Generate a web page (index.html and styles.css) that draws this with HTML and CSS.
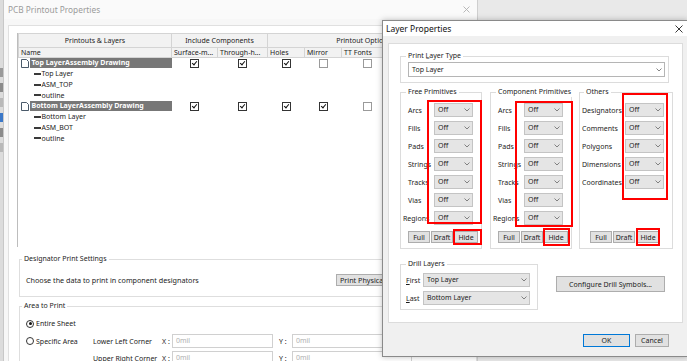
FILE: index.html
```html
<!DOCTYPE html>
<html lang="en">
<head>
	<meta charset="UTF-8">
	<title>PCB Printout Properties</title>
	<link rel="stylesheet" href="styles.css">
</head>
<body>
	<div class="desk">
		<div class="sliver">
			<span class="s1"></span><span class="s2"></span><span class="s3"></span><span class="s4"></span><span class="s2"></span><span class="s3"></span>
		</div>
		<div class="win">
			<div class="win-title">
				<span>PCB Printout Properties</span>
				<svg class="close" width="7" height="7" viewBox="0 0 7 7"><path d="M0.5 0.5L6.5 6.5M6.5 0.5L0.5 6.5" stroke="#b0b0b0" stroke-width="0.9"/></svg>
			</div>
			<div class="win-body">
				<div class="panel">
					<div class="grid-box">
						<table class="layers">
							<colgroup>
								<col style="width:153px"><col style="width:46px"><col style="width:50px"><col style="width:37px"><col style="width:37px"><col style="width:52px"><col style="width:66px">
							</colgroup>
							<thead>
								<tr class="h1">
									<th>Printouts &amp; Layers</th>
									<th colspan="2">Include Components</th>
									<th colspan="4">Printout Options</th>
								</tr>
								<tr class="h2">
									<th>Name</th>
									<th>Surface-m...</th>
									<th>Through-h...</th>
									<th>Holes</th>
									<th>Mirror</th>
									<th>TT Fonts</th>
									<th>Design Views</th>
								</tr>
							</thead>
							<tbody>
								<tr>
									<td class="print">
										<svg class="doc" width="8" height="9" viewBox="0 0 8 9"><path d="M0.5 0.5H5.5L7.5 2.5V8.5H0.5Z" fill="#fff" stroke="#4a5a6a"/><path d="M1 8H7.5V8.5H1Z" fill="#4a5a6a"/></svg>
										<span class="pname">Top LayerAssembly Drawing</span>
									</td>
									<td><span class="cb on"></span></td>
									<td><span class="cb on"></span></td>
									<td><span class="cb on"></span></td>
									<td><span class="cb"></span></td>
									<td><span class="cb"></span></td>
									<td></td>
								</tr>
								<tr><td class="layer"><span class="dash"></span>Top Layer</td><td colspan="6"></td></tr>
								<tr><td class="layer"><span class="dash"></span>ASM_TOP</td><td colspan="6"></td></tr>
								<tr><td class="layer"><span class="dash"></span>outline</td><td colspan="6"></td></tr>
								<tr>
									<td class="print">
										<svg class="doc" width="8" height="9" viewBox="0 0 8 9"><path d="M0.5 0.5H5.5L7.5 2.5V8.5H0.5Z" fill="#fff" stroke="#4a5a6a"/><path d="M1 8H7.5V8.5H1Z" fill="#4a5a6a"/></svg>
										<span class="pname">Bottom LayerAssembly Drawing</span>
									</td>
									<td><span class="cb on"></span></td>
									<td><span class="cb on"></span></td>
									<td><span class="cb on"></span></td>
									<td><span class="cb on"></span></td>
									<td><span class="cb"></span></td>
									<td></td>
								</tr>
								<tr><td class="layer"><span class="dash"></span>Bottom Layer</td><td colspan="6"></td></tr>
								<tr><td class="layer"><span class="dash"></span>ASM_BOT</td><td colspan="6"></td></tr>
								<tr><td class="layer"><span class="dash"></span>outline</td><td colspan="6"></td></tr>
							</tbody>
						</table>
					</div>

					<fieldset class="mgroup desig">
						<legend>Designator Print Settings</legend>
						<div class="desig-row">
							<span>Choose the data to print in component designators</span>
							<span class="btn phys">Print Physical Designators</span>
						</div>
					</fieldset>

					<fieldset class="mgroup area">
						<legend>Area to Print</legend>
						<div class="area-grid">
							<span class="radio on"></span><span class="rlabel">Entire Sheet</span>
							<span></span><span></span><span></span><span></span><span></span><span></span>

							<span class="radio"></span><span class="rlabel">Specific Area</span>
							<span>Lower Left Corner</span><span>X :</span><span class="inp">0mil</span>
							<span class="ylab">Y :</span><span class="inp">0mil</span><span></span>

							<span></span><span></span>
							<span>Upper Right Corner</span><span>X :</span><span class="inp">0mil</span>
							<span class="ylab">Y :</span><span class="inp">0mil</span><span></span>
						</div>
					</fieldset>
				</div>
			</div>
		</div>

		<div class="dialog">
			<div class="dlg-title">
				<span>Layer Properties</span>
				<svg class="dclose" width="8" height="8" viewBox="0 0 8 8"><path d="M0.5 0.5L7.5 7.5M7.5 0.5L0.5 7.5" stroke="#222" stroke-width="0.9"/></svg>
			</div>
			<div class="dlg-body">
				<div class="dpanel">
					<fieldset class="dgroup ptype">
						<legend>Print L&#818;ayer Type</legend>
						<div class="sel wide white"><span>Top Layer</span><svg width="6" height="4" viewBox="0 0 6 4"><path d="M0.5 0.5L3 3L5.5 0.5" fill="none" stroke="#666" stroke-width="0.8"/></svg></div>
					</fieldset>

					<div class="prims">
						<fieldset class="dgroup prim free">
							<legend>Free Primitives</legend>
							<div class="prow"><span class="plab">Arcs</span><div class="sel"><span>Off</span><svg width="6" height="4" viewBox="0 0 6 4"><path d="M0.5 0.5L3 3L5.5 0.5" fill="none" stroke="#666" stroke-width="0.8"/></svg></div></div>
							<div class="prow"><span class="plab">Fills</span><div class="sel"><span>Off</span><svg width="6" height="4" viewBox="0 0 6 4"><path d="M0.5 0.5L3 3L5.5 0.5" fill="none" stroke="#666" stroke-width="0.8"/></svg></div></div>
							<div class="prow"><span class="plab">Pads</span><div class="sel"><span>Off</span><svg width="6" height="4" viewBox="0 0 6 4"><path d="M0.5 0.5L3 3L5.5 0.5" fill="none" stroke="#666" stroke-width="0.8"/></svg></div></div>
							<div class="prow"><span class="plab">Strings</span><div class="sel"><span>Off</span><svg width="6" height="4" viewBox="0 0 6 4"><path d="M0.5 0.5L3 3L5.5 0.5" fill="none" stroke="#666" stroke-width="0.8"/></svg></div></div>
							<div class="prow"><span class="plab">Tracks</span><div class="sel"><span>Off</span><svg width="6" height="4" viewBox="0 0 6 4"><path d="M0.5 0.5L3 3L5.5 0.5" fill="none" stroke="#666" stroke-width="0.8"/></svg></div></div>
							<div class="prow"><span class="plab">Vias</span><div class="sel"><span>Off</span><svg width="6" height="4" viewBox="0 0 6 4"><path d="M0.5 0.5L3 3L5.5 0.5" fill="none" stroke="#666" stroke-width="0.8"/></svg></div></div>
							<div class="prow"><span class="plab reg">Regions</span><div class="sel"><span>Off</span><svg width="6" height="4" viewBox="0 0 6 4"><path d="M0.5 0.5L3 3L5.5 0.5" fill="none" stroke="#666" stroke-width="0.8"/></svg></div></div>
							<div class="btns"><span class="btn sm">Full</span><span class="btn sm">Draft</span><span class="btn sm hide">Hide</span></div>
						</fieldset>

						<fieldset class="dgroup prim comp">
							<legend>Component Primitives</legend>
							<div class="prow"><span class="plab">Arcs</span><div class="sel"><span>Off</span><svg width="6" height="4" viewBox="0 0 6 4"><path d="M0.5 0.5L3 3L5.5 0.5" fill="none" stroke="#666" stroke-width="0.8"/></svg></div></div>
							<div class="prow"><span class="plab">Fills</span><div class="sel"><span>Off</span><svg width="6" height="4" viewBox="0 0 6 4"><path d="M0.5 0.5L3 3L5.5 0.5" fill="none" stroke="#666" stroke-width="0.8"/></svg></div></div>
							<div class="prow"><span class="plab">Pads</span><div class="sel"><span>Off</span><svg width="6" height="4" viewBox="0 0 6 4"><path d="M0.5 0.5L3 3L5.5 0.5" fill="none" stroke="#666" stroke-width="0.8"/></svg></div></div>
							<div class="prow"><span class="plab">Strings</span><div class="sel"><span>Off</span><svg width="6" height="4" viewBox="0 0 6 4"><path d="M0.5 0.5L3 3L5.5 0.5" fill="none" stroke="#666" stroke-width="0.8"/></svg></div></div>
							<div class="prow"><span class="plab">Tracks</span><div class="sel"><span>Off</span><svg width="6" height="4" viewBox="0 0 6 4"><path d="M0.5 0.5L3 3L5.5 0.5" fill="none" stroke="#666" stroke-width="0.8"/></svg></div></div>
							<div class="prow"><span class="plab">Vias</span><div class="sel"><span>Off</span><svg width="6" height="4" viewBox="0 0 6 4"><path d="M0.5 0.5L3 3L5.5 0.5" fill="none" stroke="#666" stroke-width="0.8"/></svg></div></div>
							<div class="prow"><span class="plab reg">Regions</span><div class="sel"><span>Off</span><svg width="6" height="4" viewBox="0 0 6 4"><path d="M0.5 0.5L3 3L5.5 0.5" fill="none" stroke="#666" stroke-width="0.8"/></svg></div></div>
							<div class="btns"><span class="btn sm">Full</span><span class="btn sm">Draft</span><span class="btn sm hide">Hide</span></div>
						</fieldset>

						<fieldset class="dgroup prim others">
							<legend>Others</legend>
							<div class="prow"><span class="plab">Designators</span><div class="sel"><span>Off</span><svg width="6" height="4" viewBox="0 0 6 4"><path d="M0.5 0.5L3 3L5.5 0.5" fill="none" stroke="#666" stroke-width="0.8"/></svg></div></div>
							<div class="prow"><span class="plab">Comments</span><div class="sel"><span>Off</span><svg width="6" height="4" viewBox="0 0 6 4"><path d="M0.5 0.5L3 3L5.5 0.5" fill="none" stroke="#666" stroke-width="0.8"/></svg></div></div>
							<div class="prow"><span class="plab">Polygons</span><div class="sel"><span>Off</span><svg width="6" height="4" viewBox="0 0 6 4"><path d="M0.5 0.5L3 3L5.5 0.5" fill="none" stroke="#666" stroke-width="0.8"/></svg></div></div>
							<div class="prow"><span class="plab">Dimensions</span><div class="sel"><span>Off</span><svg width="6" height="4" viewBox="0 0 6 4"><path d="M0.5 0.5L3 3L5.5 0.5" fill="none" stroke="#666" stroke-width="0.8"/></svg></div></div>
							<div class="prow"><span class="plab">Coordinates</span><div class="sel"><span>Off</span><svg width="6" height="4" viewBox="0 0 6 4"><path d="M0.5 0.5L3 3L5.5 0.5" fill="none" stroke="#666" stroke-width="0.8"/></svg></div></div>
							<div class="btns"><span class="btn sm">Full</span><span class="btn sm">Draft</span><span class="btn sm hide">Hide</span></div>
						</fieldset>
					</div>

					<div class="drill-row">
						<fieldset class="dgroup drill">
							<legend>Drill Layers</legend>
							<div class="drow"><span class="dlab">First</span><div class="sel long"><span>Top Layer</span><svg width="6" height="4" viewBox="0 0 6 4"><path d="M0.5 0.5L3 3L5.5 0.5" fill="none" stroke="#666" stroke-width="0.8"/></svg></div></div>
							<div class="drow"><span class="dlab">Last</span><div class="sel long"><span>Bottom Layer</span><svg width="6" height="4" viewBox="0 0 6 4"><path d="M0.5 0.5L3 3L5.5 0.5" fill="none" stroke="#666" stroke-width="0.8"/></svg></div></div>
						</fieldset>
						<span class="btn config">Configure Drill Symbols...</span>
					</div>
				</div>
				<div class="dlg-foot">
					<span class="btn ok">OK</span>
					<span class="btn cancel">Cancel</span>
				</div>
			</div>

			<!-- red marks drawn over the screenshot -->
			<span class="mark m-free"></span>
			<span class="mark m-free-hide"></span>
			<span class="mark m-comp"></span>
			<span class="mark m-comp-hide"></span>
			<span class="mark m-oth"></span>
			<span class="mark m-oth-hide"></span>
		</div>
	</div>
</body>
</html>
```

FILE: styles.css
```css
html, body { margin: 0; padding: 0; }
body {
	font-family: "Noto Sans", "Open Sans", sans-serif;
	font-size: 7px;
	color: #1c1c1c;
	background: #f0f0f0;
}
.desk {
	position: relative;
	width: 687px;
	height: 361px;
	overflow: hidden;
	display: flex;
	background: #e9e9e9;
}

/* sliver of the window behind */
.sliver {
	width: 3px;
	display: flex;
	flex-direction: column;
	background: #dcdcdc;
	padding-top: 68px;
	gap: 6px;
}
.sliver span { display: block; height: 9px; }
.sliver .s1 { background: #9a9a9a; }
.sliver .s2 { background: #8c8c8c; }
.sliver .s3 { background: #b9b9b9; }
.sliver .s4 { background: #3b78c8; }

/* main window */
.win {
	width: 473px;
	border-left: 1px solid #c8c8c8;
	border-right: 1px solid #cfcfcf;
	background: #f7f7f7;
	display: flex;
	flex-direction: column;
	overflow: hidden;
}
.win-title {
	flex: none;
	height: 19px;
	display: flex;
	align-items: center;
	justify-content: space-between;
	padding: 0 7px 0 4px;
	font-size: 8.3px;
	color: #9a9a9a;
	background: #fafafa;
}
.win-body { padding: 6px 0 0 4px; flex: 1; min-height: 0; }
.panel {
	height: 340px;
	background: #fff;
	border: 1px solid #e0e0e0;
	padding: 7px 0 0 8px;
}
.grid-box {
	width: 460px;
	height: 214px;
	border-left: 1px solid #bdbdbd;
}
.layers {
	border-collapse: collapse;
	table-layout: fixed;
	width: 441px;
}
.layers th {
	font-weight: normal;
	background: #f2f2f2;
	border: 1px solid #d4d4d4;
	padding: 0;
	white-space: nowrap;
	overflow: hidden;
}
.layers .h1 th { height: 13px; text-align: center; }
.layers .h2 th { height: 9px; line-height: 9px; text-align: left; padding-left: 2px; }
.layers td {
	height: 10.75px;
	padding: 0;
	line-height: 10px;
	text-align: center;
	white-space: nowrap;
}
.layers td.print {
	text-align: left;
	padding-left: 2px;
	display: flex;
	align-items: center;
	gap: 1px;
}
.doc { flex: none; }
.pname {
	flex: 1;
	background: #777;
	color: #fff;
	font-weight: bold;
	padding-left: 2px;
	line-height: 10px;
}
.layers td.layer { text-align: left; padding-left: 15px; }
.dash {
	display: inline-block;
	width: 7px;
	height: 2px;
	background: #3a3a3a;
	vertical-align: middle;
	margin: 0 1px 1px 0;
}
.cb {
	display: inline-block;
	width: 7px;
	height: 7px;
	border: 1px solid #9a9a9a;
	background: #fff;
	vertical-align: middle;
	position: relative;
}
.cb.on { border-color: #333; }
.cb.on::after {
	content: "";
	position: absolute;
	left: 2px;
	top: 0;
	width: 2px;
	height: 4px;
	border: solid #111;
	border-width: 0 1.5px 1.5px 0;
	transform: rotate(40deg);
}

/* group boxes in the main window */
.mgroup {
	margin: 7px 0 0 2px;
	width: 451px;
	border: 1px solid #dedede;
	padding: 0 6px;
}
.mgroup legend { padding: 0 2px; margin-left: -4px; line-height: 10px; }
.desig { padding: 10px 0 10px 6px; }
.desig-row {
	display: grid;
	grid-template-columns: 310px auto;
	align-items: center;
	height: 12px;
	font-size: 7.2px;
}
.btn {
	display: inline-flex;
	align-items: center;
	justify-content: center;
	background: #e1e1e1;
	border: 1px solid #adadad;
	box-sizing: border-box;
	white-space: nowrap;
	overflow: hidden;
}
.phys { height: 12px; width: 110px; justify-content: flex-start; padding-left: 3px; }
.area { margin-top: 4px; padding: 5px 0 10px 6px; }
.area-grid {
	display: grid;
	grid-template-columns: 10px 57px 69px 10px 101px 19px 120px 1fr;
	grid-template-rows: 15px 14px 14px;
	row-gap: 3px;
	align-items: center;
	white-space: nowrap;
}
.radio {
	width: 8px;
	height: 8px;
	border: 1px solid #333;
	border-radius: 50%;
	box-sizing: border-box;
	position: relative;
}
.radio.on::after {
	content: "";
	position: absolute;
	left: 1.5px;
	top: 1.5px;
	width: 3px;
	height: 3px;
	border-radius: 50%;
	background: #111;
}
.ylab { padding-left: 6px; }
.inp {
	height: 14px;
	border: 1px solid #d0d0d0;
	box-sizing: border-box;
	color: #b0b0b0;
	padding-left: 3px;
	line-height: 12px;
}

/* Layer Properties dialog */
.dialog {
	position: absolute;
	left: 382px;
	top: 20px;
	width: 306px;
	height: 337px;
	box-sizing: border-box;
	border: 1px solid #8a8a8a;
	background: #f0f0f0;
	box-shadow: 0 0 6px rgba(0, 0, 0, 0.25);
	display: flex;
	flex-direction: column;
}
.dlg-title {
	flex: none;
	height: 15px;
	background: #fff;
	display: flex;
	align-items: center;
	justify-content: space-between;
	padding: 0 4px 0 3px;
	font-size: 8.5px;
	color: #111;
}
.dlg-body { padding: 7px 4px 0 5px; flex: 1; }
.dpanel {
	height: 280px;
	box-sizing: border-box;
	background: #fff;
	border: 1px solid #dcdcdc;
	padding: 7px 0 0 11px;
}
.dgroup {
	margin: 0;
	border: 1px solid #dcdcdc;
	box-sizing: border-box;
	min-width: 0;
}
.dgroup legend {
	padding: 0 2px;
	margin-left: -2px;
	line-height: 10px;
	white-space: nowrap;
	overflow: hidden;
	max-width: 76px;
}
.ptype { width: 269px; padding: 1px 2px 5px 7px; }
.sel {
	height: 14px;
	width: 39px;
	box-sizing: border-box;
	background: #e5e5e5;
	border: 1px solid #c4c4c4;
	display: flex;
	align-items: center;
	justify-content: space-between;
	padding: 0 2px 0 3px;
	line-height: 12px;
	flex: none;
}
.sel.wide { width: 257px; height: 15px; }
.sel.white { background: #fff; border-color: #b5b5b5; }
.sel.long { width: 107px; }

.prims { display: flex; margin-top: 4px; }
.prim {
	height: 162px;
	padding: 6px 0 5px 7px;
	display: flex;
	flex-direction: column;
	gap: 4px;
}
.free { width: 82px; }
.comp { width: 82px; margin-left: 8px; }
.others { width: 94px; margin-left: 7px; padding-left: 2px; }
.others legend { margin-left: 2px; }
.prow { display: flex; align-items: center; height: 14px; flex: none; }
.plab { width: 26px; flex: none; white-space: nowrap; }
.others .plab { width: 43px; }
.plab.reg { margin-left: -5px; width: 31px; }
.btns { display: flex; gap: 1px; margin-top: auto; }
.others .btns { padding-left: 8px; }
.btn.sm { height: 12px; width: 22px; }
.btn.sm.hide { width: 24px; }

.drill-row { display: flex; align-items: flex-start; margin-top: 10px; }
.drill { width: 138px; padding: 4px 0 4px 5px; display: flex; flex-direction: column; gap: 4px; }
.drill legend { margin-left: 0; }
.drow { display: flex; align-items: center; height: 14px; }
.dlab { width: 17px; flex: none; }
.dlab::first-letter { text-decoration: underline; }
.config { margin: 17px 0 0 18px; width: 109px; height: 16px; }

.dlg-foot {
	display: flex;
	justify-content: flex-end;
	gap: 5px;
	padding: 11px 14px 0 0;
}
.ok { width: 47px; height: 13px; border-color: #0078d7; }
.cancel { width: 34px; height: 13px; }

/* red annotation boxes */
.mark {
	position: absolute;
	border: 2px solid #ff0000;
	box-sizing: border-box;
}
.m-free { left: 44px; top: 79px; width: 55px; height: 124px; }
.m-free-hide { left: 70px; top: 208px; width: 29px; height: 16px; }
.m-comp { left: 132px; top: 80px; width: 58px; height: 126px; }
.m-comp-hide { left: 160px; top: 207px; width: 27px; height: 18px; }
.m-oth { left: 239px; top: 72px; width: 46px; height: 107px; }
.m-oth-hide { left: 253px; top: 207px; width: 24px; height: 18px; }
```
